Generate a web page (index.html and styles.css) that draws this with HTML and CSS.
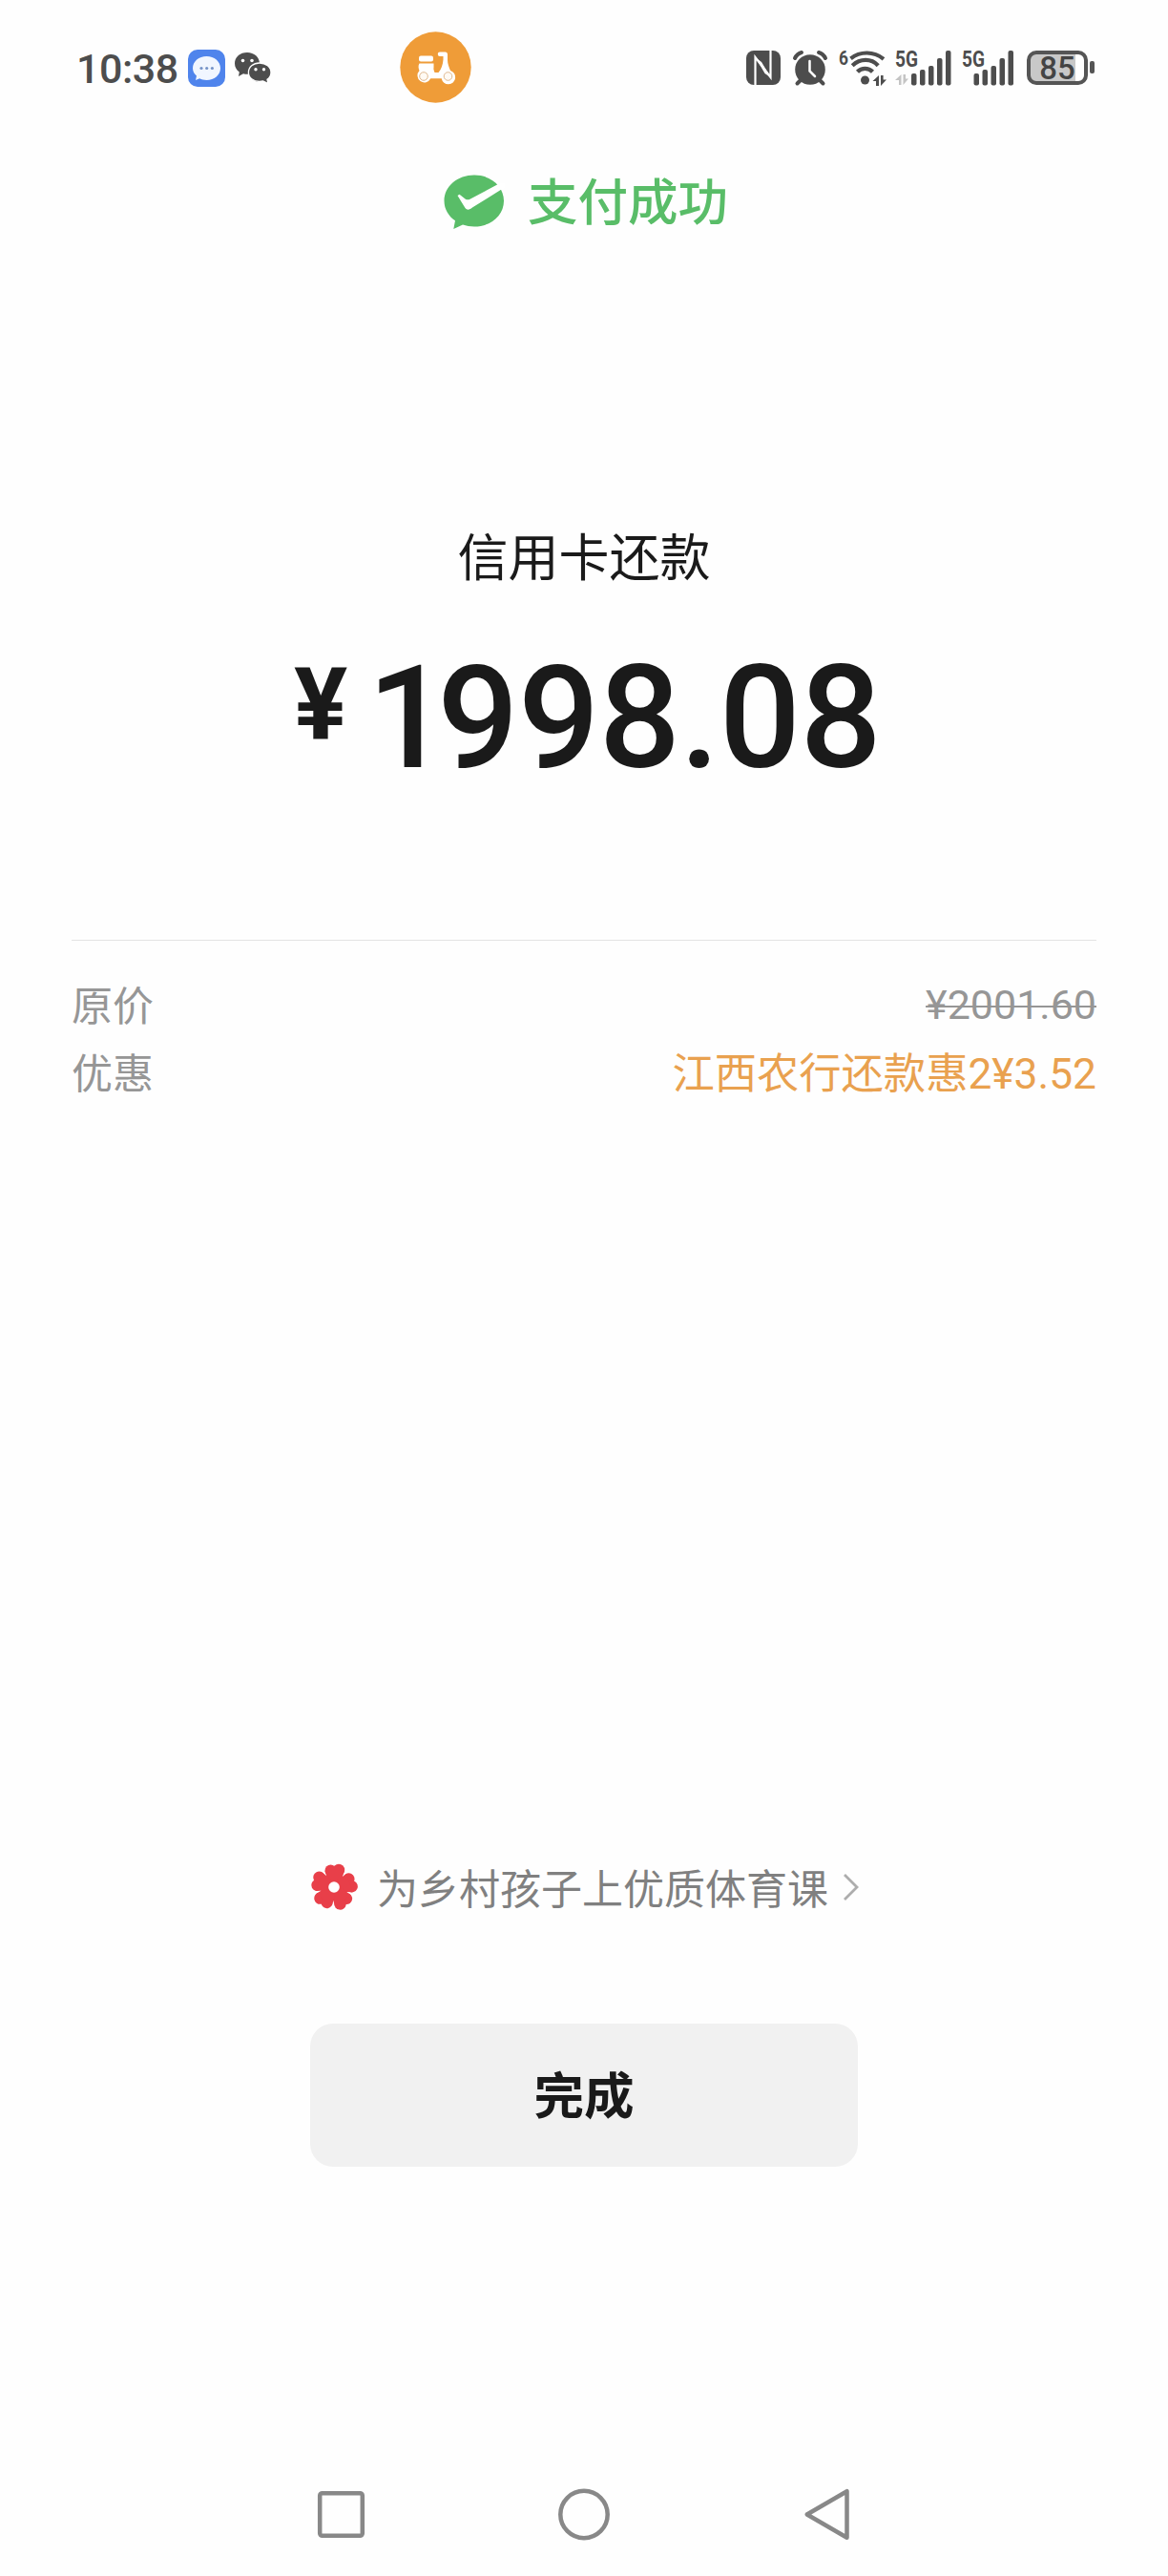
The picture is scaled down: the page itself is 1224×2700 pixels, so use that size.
FILE: index.html
```
<!DOCTYPE html>
<html lang="zh-CN">
<head>
    <meta charset="UTF-8">
    <meta name="viewport" content="width=device-width, initial-scale=1.0">
    <title>支付成功</title>
    <link rel="stylesheet" href="styles.css">
</head>
<body>
    <div class="status-bar">
        <span class="time">10:38</span>
        <svg class="icon-message" width="39" height="39" viewBox="0 0 39 39">
            <rect width="39" height="39" rx="10" fill="#4f84ec"/>
            <path d="M19.500 7C27.500 7 34 12.300 34 19.500S27.500 32 19.500 32c-2.800 0-5.300-.6-7.300-1.700L8 32l1-4.500C6.500 25.500 5 22.700 5 19.500 5 12.300 11.500 7 19.500 7z" fill="#f1f6ff"/>
            <circle cx="14" cy="19.500" r="1.600" fill="#7593c8"/>
            <circle cx="19.700" cy="19.500" r="1.600" fill="#7593c8"/>
            <circle cx="25.400" cy="19.500" r="1.600" fill="#7593c8"/>
        </svg>
        <svg class="icon-wechat" width="40" height="36" viewBox="0 0 40 36">
            <path d="M14 1C6.500 1 1 5.900 1 12.500c0 3.700 1.800 6.900 4.800 9L5 26l5-2.800c1.300.4 2.600.6 4 .6 7.500 0 13-4.900 13-11.300S21.500 1 14 1z" fill="#4d4d4d"/>
            <circle cx="9.500" cy="9.500" r="1.800" fill="#fff"/>
            <circle cx="19" cy="9.500" r="1.800" fill="#fff"/>
            <path d="M27 12c-6.600 0-11.600 4.200-11.600 9.900S20.400 31.500 27 31.500c1.300 0 2.500-.2 3.600-.5L36 33.500l-1-4.200c2.500-1.800 4-4.400 4-7.400C39 16.200 33.600 12 27 12z" fill="#4d4d4d" stroke="#fff" stroke-width="1.300"/>
            <circle cx="23" cy="18.700" r="1.700" fill="#fff"/>
            <circle cx="31.500" cy="18.700" r="1.700" fill="#fff"/>
        </svg>
        <svg class="icon-scooter" width="75" height="75" viewBox="0 0 75 75">
            <circle cx="37.500" cy="37.500" r="37.200" fill="#ef9c38"/>
            <rect x="20" y="25.500" width="15" height="6" rx="2" fill="#fff"/>
            <path d="M20.500 33.500H35.500V37.500c-.5 2.500.5 3.500 1 5.500h4c3-3.500 4.500-8 5-13.500v-3.500h-3.500a1.800 1.800 0 0 1 0-4.500H47.500c1.700 0 2.500 1 2.500 2.500V30c0 4 1.500 7 3 11a7.300 7.300 0 1 1-9.300 8.300H32.300A7.300 7.300 0 1 1 20.500 41c-1-2-1.500-5.500 0-7.500z" fill="#fff"/>
            <circle cx="25" cy="47" r="4.300" fill="#fffaf4" stroke="#dfb990" stroke-width="1"/>
            <circle cx="50.500" cy="47" r="4.300" fill="#fffaf4" stroke="#dfb990" stroke-width="1"/>
        </svg>

        <svg class="icon-nfc" width="36" height="36" viewBox="0 0 36 36">
            <rect width="36" height="36" rx="8" fill="#4d4d4d"/>
            <path d="M9.500 36V7L25.500 28V0" fill="none" stroke="#fff" stroke-width="2.200"/>
            <path d="M10 7.500L16 12L25.500 28L19.500 24z" fill="#fff"/>
        </svg>
        <svg class="icon-alarm" width="36" height="38" viewBox="0 0 36 38">
            <g stroke="#4d4d4d" stroke-width="4" stroke-linecap="round" fill="none">
                <path d="M2 8C3.500 5 6 2.800 9 2M34 8C32.500 5 30 2.800 27 2M4.500 34.500L9 30M31.500 34.500L27 30"/>
            </g>
            <circle cx="18" cy="20" r="15.800" fill="#4d4d4d"/>
            <path d="M17.500 11V21.500L23 27" fill="none" stroke="#fff" stroke-width="2.500" stroke-linecap="round"/>
        </svg>
        <svg class="icon-wifi" width="52" height="42" viewBox="0 0 52 42">
            <text class="tiny" x="0" y="17" font-size="21" textLength="10" lengthAdjust="spacingAndGlyphs">6</text>
            <g fill="none" stroke="#4d4d4d" stroke-width="4.200">
                <path d="M12.500 10.300C22.500 2.500 36.500 2.500 47 10.800"/>
                <path d="M14.200 17.700C22.500 10 34 10 41.200 17.700"/>
                <path d="M19.500 24.300C24 19.600 31 19.600 35.500 24.300"/>
            </g>
            <circle cx="27.500" cy="33" r="4.500" fill="#4d4d4d"/>
            <path d="M42 28v11h-3v-5h-3.500zM44 39V28h2.600v4.500H50z" fill="#4d4d4d"/>
        </svg>
        <svg class="icon-signal" width="60" height="42" viewBox="0 0 60 42">
            <text class="tiny" x="0" y="19" font-size="23" textLength="24" lengthAdjust="spacingAndGlyphs">5G</text>
            <path d="M6.500 27v11h-2.500v-5H0zM8.500 38V27h2.500v4.500h3z" fill="#c4c4c4"/>
            <g fill="#4d4d4d">
                <rect x="17" y="26" width="5.500" height="12.500" rx="2"/>
                <rect x="26" y="22" width="5.500" height="16.500" rx="2"/>
                <rect x="35" y="18" width="5.500" height="20.500" rx="2"/>
                <rect x="44" y="10" width="5.500" height="28.500" rx="2"/>
                <rect x="53" y="2" width="5.500" height="36.500" rx="2"/>
            </g>
        </svg>
        <svg class="icon-signal second" width="60" height="42" viewBox="0 0 60 42">
            <text class="tiny" x="0" y="19" font-size="23" textLength="24" lengthAdjust="spacingAndGlyphs">5G</text>
            <g fill="#4d4d4d">
                <rect x="12.500" y="26" width="5.500" height="12.500" rx="2"/>
                <rect x="21.500" y="22" width="5.500" height="16.500" rx="2"/>
                <rect x="30.500" y="18" width="5.500" height="20.500" rx="2"/>
                <rect x="39.500" y="10" width="5.500" height="28.500" rx="2"/>
                <rect x="48.500" y="2" width="5.500" height="36.500" rx="2"/>
            </g>
        </svg>
        <div class="battery"><span>85</span></div>
        <div class="battery-tip"></div>
    </div>

    <div class="pay-title">
        <svg width="64" height="58" viewBox="0 0 64 58">
            <path d="M32 .5C14.500.5.500 12.300.500 27.500c0 9 4.800 16.300 11.500 20.800L10.300 57l9.700-4.500c3.700 1.300 7.700 2 12 2 17.500 0 31-11.800 31-27C63 12.300 49.500.5 32 .5z" fill="#59bd68"/>
            <path d="M57 10L64 8.500V14L60.500 15.500L30 34.500C27 37 24.500 37.500 22.500 35C19.500 30 17 26 14.500 22L16.500 20.800L22.500 25.500C24.500 26.800 26 26.500 28 25.500z" fill="#fff"/>
        </svg>
        <span>支付成功</span>
    </div>

    <div class="payee">信用卡还款</div>
    <div class="amount"><span class="yen">¥</span><span class="number"><span class="first">1</span>998.08</span></div>

    <div class="detail">
        <div class="row">
            <span>原价</span>
            <span class="old-price">¥2001.60</span>
        </div>
        <div class="row">
            <span>优惠</span>
            <span class="discount">江西农行还款惠2¥3.52</span>
        </div>
    </div>

    <div class="charity">
        <svg class="flower" width="50" height="50" viewBox="-25 -25 50 50">
            <g fill="#e83f49">
                <circle r="14"/>
                <g id="petal"><circle cx="-3.500" cy="-17.500" r="6"/><circle cx="5" cy="-18" r="6.200"/><path d="M-9.500-17L11-17L7-6H-6z"/></g>
                <use href="#petal" transform="rotate(72)"/>
                <use href="#petal" transform="rotate(144)"/>
                <use href="#petal" transform="rotate(216)"/>
                <use href="#petal" transform="rotate(288)"/>
            </g>
            <circle r="5.800" fill="#fff"/>
        </svg>
        <span class="charity-text">为乡村孩子上优质体育课</span>
        <svg class="arrow" width="18" height="30" viewBox="0 0 18 30">
            <path d="M2 2L15 15L2 28" fill="none" stroke="#adadad" stroke-width="2.800"/>
        </svg>
    </div>

    <button class="done">完成</button>

    <div class="nav-bar">
        <svg width="54" height="56" viewBox="0 0 54 56"><rect x="5.200" y="5.200" width="44.600" height="44.600" rx="2.500"/></svg>
        <svg width="54" height="56" viewBox="0 0 54 56"><circle cx="27" cy="27.500" r="24.700"/></svg>
        <svg width="54" height="56" viewBox="0 0 54 56"><path d="M47.500 3.200V51.800L5.700 27.500z"/></svg>
    </div>
</body>
</html>
```
FILE: styles.css
```
* {
    box-sizing: border-box;
}
body {
    margin: 0;
    height: 2700px;
    background-color: #fefefe;
    font-family: Roboto, "Noto Sans CJK SC", sans-serif;
    color: #1a1a1a;
}
svg {
    display: block;
    flex: none;
    overflow: visible;
}
.status-bar {
    display: flex;
    align-items: flex-start;
    height: 142px;
    padding: 33px 0 0 80px;
    color: #4d4d4d;
}
.time {
    width: 117px;
    margin-top: 13px;
    font-size: 43px;
    font-weight: 500;
    line-height: 52px;
    letter-spacing: -0.5px;
    white-space: nowrap;
}
.icon-message {
    margin-top: 19px;
}
.icon-wechat {
    margin: 21px 0 0 9px;
}
.icon-scooter {
    margin-left: 134px;
}
.icon-nfc {
    margin: 20px 0 0 288px;
}
.icon-alarm {
    margin: 20px 0 0 13px;
}
.icon-wifi {
    margin: 18px 0 0 12px;
}
.icon-signal {
    margin: 18px 0 0 7px;
}
.icon-signal.second {
    margin-left: 10px;
}
.tiny {
    font-family: Roboto, sans-serif;
    font-weight: 700;
    fill: #4d4d4d;
}
.battery {
    width: 64px;
    height: 36px;
    margin: 20px 0 0 8px;
    border: 4px solid #555;
    border-radius: 10px;
    background: linear-gradient(to right, #c8c8c8 47px, #fff 47px);
    font-size: 33px;
    font-weight: 500;
    line-height: 29px;
    text-align: center;
    color: #444;
}
.battery-tip {
    width: 5px;
    height: 13px;
    margin: 31px 0 0 2px;
    border-radius: 2px;
    background-color: #555;
}
.pay-title {
    display: flex;
    justify-content: center;
    gap: 24px;
    height: 80px;
    margin-top: 41px;
    padding-left: 4px;
    font-size: 52.5px;
    font-weight: 500;
    line-height: 61px;
    color: #59bd68;
}
.payee {
    margin-top: 290px;
    font-size: 53px;
    line-height: 66px;
    text-align: center;
}
.amount {
    display: flex;
    height: 150px;
    margin-top: 59px;
    padding-left: 308px;
    font-size: 150px;
    font-weight: 500;
    line-height: 150px;
}
.yen {
    width: 77px;
    font-size: 105px;
    font-weight: 700;
    line-height: 124px;
}
.number {
    letter-spacing: -0.5px;
}
.first {
    letter-spacing: -12px;
}
.detail {
    margin: 157px 75px 0;
    padding-top: 34px;
    border-top: 1px solid #e3e3e3;
    color: #969696;
}
.row {
    display: flex;
    justify-content: space-between;
    height: 71px;
    font-size: 43px;
    line-height: 70px;
}
.old-price {
    line-height: 66px;
    text-decoration: line-through;
    text-decoration-thickness: 2px;
}
.discount {
    font-size: 44.3px;
    color: #e9a14f;
}
.charity {
    display: flex;
    align-items: center;
    height: 60px;
    margin-top: 786px;
    padding-left: 325px;
    font-size: 43px;
    line-height: 60px;
    color: #808080;
}
.charity-text {
    padding-top: 5px;
}
.flower {
    margin-right: 20px;
}
.arrow {
    margin-left: 15px;
}
.done {
    display: block;
    width: 574px;
    height: 150px;
    margin: 113px auto 0;
    padding: 0 0 6px;
    border: none;
    border-radius: 24px;
    background-color: #f1f1f1;
    font-family: inherit;
    font-size: 52.5px;
    font-weight: 700;
    color: #1a1a1a;
}
.nav-bar {
    display: flex;
    gap: 201px;
    margin-top: 337px;
    padding-left: 330px;
}
.nav-bar svg {
    fill: none;
    stroke: #888;
    stroke-width: 4.500;
    stroke-linejoin: round;
}
```
